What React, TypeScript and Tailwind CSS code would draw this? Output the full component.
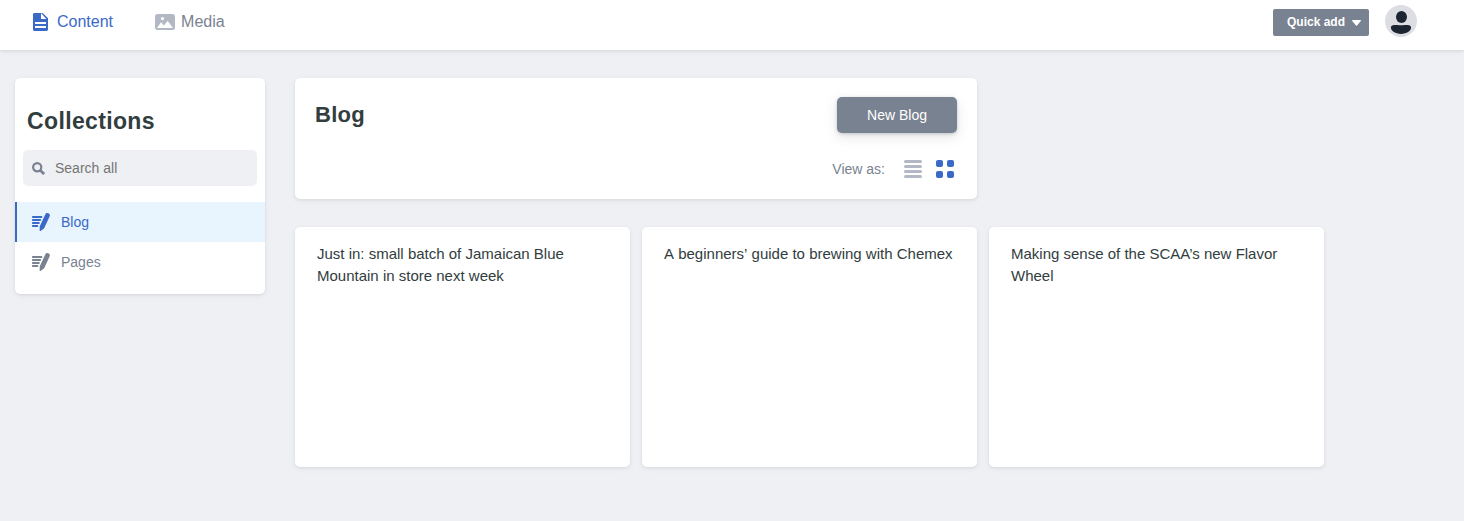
import React from "react";

const cardShadow =
  "shadow-[0_2px_6px_0_rgba(68,74,87,0.05),0_1px_3px_0_rgba(68,74,87,0.1)]";

function PageIcon() {
  return (
    <svg width="15" height="18" viewBox="0 0 15 18" fill="currentColor">
      <path
        fillRule="evenodd"
        d="M1.4 0H8v5.6c0 .3.2.5.5.5H15v10.5c0 .8-.6 1.4-1.4 1.4H1.4C.6 18 0 17.400 0 16.600V1.400C0 .6.6 0 1.400 0zM2 9v2h11V9zm0 4v2h11v-2z"
      />
      <path d="M8 0h1.700L15 5.300V6.500h-1.200L8 0z" />
      <path d="M8 1.500L12.300 6H8z" fill="#fff" />
    </svg>
  );
}

function MediaIcon() {
  return (
    <svg width="20" height="16" viewBox="0 0 20 16">
      <rect width="20" height="16" rx="2.800" fill="#b3b9c4" />
      <circle cx="7.500" cy="4.600" r="1.600" fill="#fff" />
      <path d="M2 14l4-5.800 2.800 3.300L12.700 6.900 18 14z" fill="#fff" />
    </svg>
  );
}

function WriteIcon() {
  return (
    <svg width="18" height="18" viewBox="0 0 18 18" fill="currentColor">
      <rect x="0" y="3" width="10.300" height="1.900" rx=".7" />
      <rect x="0" y="6" width="9" height="1.900" rx=".7" />
      <rect x="0" y="9" width="7.700" height="1.900" rx=".7" />
      <rect x="0" y="12" width="6.200" height="1.900" rx=".7" />
      <path
        d="M15.400 2.500L10.200 13.800"
        stroke="currentColor"
        strokeWidth="4.800"
        strokeLinecap="round"
      />
      <path d="M8 12.800L12.400 14.800 8.700 17.900C8.200 18.200 7.600 17.900 7.600 17.300z" />
    </svg>
  );
}

function SearchIcon() {
  return (
    <svg width="13" height="13" viewBox="0 0 13 13" fill="none" stroke="#798291">
      <circle cx="5.200" cy="5.200" r="4.100" strokeWidth="2.200" />
      <path d="M8.200 8.200l3.900 3.900" strokeWidth="2.700" />
    </svg>
  );
}

function UserIcon() {
  return (
    <svg width="32" height="32" viewBox="0 0 32 32">
      <circle cx="16" cy="16" r="16" fill="#dddee3" />
      <ellipse cx="16.500" cy="12" rx="5.500" ry="6.100" fill="#1e2532" />
      <path
        d="M9.500 20c1.500-.1 3.200.2 6.500.2s5-.3 6.500-.2c2.300.1 3.600 1.100 3.600 2.600 0 3.400-4.500 6.300-10.100 6.300S5.900 26 5.900 22.600C5.900 21.100 7.200 20.100 9.500 20z"
        fill="#1e2532"
      />
    </svg>
  );
}

function ListIcon() {
  return (
    <svg width="18" height="18" viewBox="0 0 18 18" fill="#b3b9c4">
      {[0, 5, 10, 15].map((y) => (
        <rect key={y} y={y} width="18" height="3" rx="1.500" />
      ))}
    </svg>
  );
}

function GridIcon() {
  return (
    <svg width="18" height="18" viewBox="0 0 18 18" fill="#3a69c7">
      <rect width="7" height="7" rx="2" />
      <rect x="11" width="7" height="7" rx="2" />
      <rect y="11" width="7" height="7" rx="2" />
      <rect x="11" y="11" width="7" height="7" rx="2" />
    </svg>
  );
}

function Header() {
  return (
    <header className="flex h-[50px] justify-between bg-white pr-[47px] pl-[33px] text-base text-[#798291] shadow-[0_2px_6px_0_rgba(68,74,87,0.05),0_1px_3px_0_rgba(68,74,87,0.1)]">
      <nav className="flex h-11 items-center">
        <a className="flex items-center gap-[9px] text-[#3a69c7]">
          <PageIcon />
          <span className="leading-6">Content</span>
        </a>
        <a className="ml-[42px] flex items-center gap-1.5">
          <MediaIcon />
          <span className="leading-6">Media</span>
        </a>
      </nav>
      <div className="flex items-start gap-4">
        <button className="mt-[9px] flex h-[27px] w-24 items-center rounded-[2px] bg-[#798291] pb-px pl-3.5 text-xs font-bold text-white">
          Quick add
          <svg className="mt-0.5 ml-[7px]" width="9" height="6" viewBox="0 0 9 6" fill="#fff">
            <path d="M.7 0h7.600c.6 0 .9.600.5 1L5 5.600c-.3.300-.7.300-1 0L.2 1C-.2.600.1 0 .7 0z" />
          </svg>
        </button>
        <div className="mt-[5px]">
          <UserIcon />
        </div>
      </div>
    </header>
  );
}

function Sidebar() {
  return (
    <aside className={`h-[216px] w-[250px] shrink-0 overflow-hidden rounded-[5px] bg-white ${cardShadow}`}>
      <h2 className="mt-[26px] ml-3 text-[23px] leading-[34px] font-bold tracking-[0.36px] text-[#313d3e]">
        Collections
      </h2>
      <div className="mx-2 mt-3 flex h-9 items-center rounded-[5px] bg-[#eff0f4] pl-[9px]">
        <SearchIcon />
        <span className="ml-2.5 text-sm text-[#757575]">Search all</span>
      </div>
      <ul className="mt-4 text-sm">
        <li className="flex h-10 items-center gap-3 border-l-2 border-[#3a69c7] bg-[#e8f5fe] pl-[15px] text-[#3a69c7]">
          <WriteIcon />
          <span className="-ml-px">Blog</span>
        </li>
        <li className="flex h-10 items-center gap-3 border-l-2 border-transparent pl-[15px] text-[#798291]">
          <WriteIcon />
          <span className="-ml-px">Pages</span>
        </li>
      </ul>
    </aside>
  );
}

function CollectionTop() {
  return (
    <section className={`h-[121px] w-[682px] rounded-[5px] bg-white px-5 pt-[19px] ${cardShadow}`}>
      <div className="flex justify-between">
        <h1 className="text-[22px] leading-9 font-bold tracking-[0.3px] text-[#313d3e]">Blog</h1>
        <button className="h-9 w-[120px] rounded-[5px] bg-[#798291] text-sm text-white shadow-[0_4px_12px_0_rgba(68,74,87,0.15),0_1px_3px_0_rgba(68,74,87,0.25)]">
          New Blog
        </button>
      </div>
      <div className="mt-[26px] flex items-center justify-end pr-[3px] text-sm text-[#798291]">
        <span className="mr-[19px]">View as:</span>
        <ListIcon />
        <span className="w-3.5" />
        <GridIcon />
      </div>
    </section>
  );
}

const posts = [
  "Just in: small batch of Jamaican Blue Mountain in store next week",
  "A beginners’ guide to brewing with Chemex",
  "Making sense of the SCAA’s new Flavor Wheel",
];

/* Each word is its own box, so kerning stays inside the word. */
function Title({ text }: { text: string }) {
  return (
    <h3>
      {text.split(" ").map((word, i) => (
        <React.Fragment key={i}>
          {i > 0 && " "}
          <span className="inline-block">{word}</span>
        </React.Fragment>
      ))}
    </h3>
  );
}

export default function App() {
  return (
    <div className="h-[521px] overflow-hidden bg-[#eff0f4] font-['Liberation_Sans',Arial,sans-serif]">
      <Header />
      <main className="flex items-start gap-[30px] pt-7 pl-[15px]">
        <Sidebar />
        <div>
          <CollectionTop />
          <ul className="mt-7 flex gap-3">
            {posts.map((title) => (
              <li
                key={title}
                className={`h-60 w-[335px] rounded-[5px] bg-white px-[22px] pt-4 text-[15px] leading-[22px] text-[#313d3e] ${cardShadow}`}
              >
                <Title text={title} />
              </li>
            ))}
          </ul>
        </div>
      </main>
    </div>
  );
}
